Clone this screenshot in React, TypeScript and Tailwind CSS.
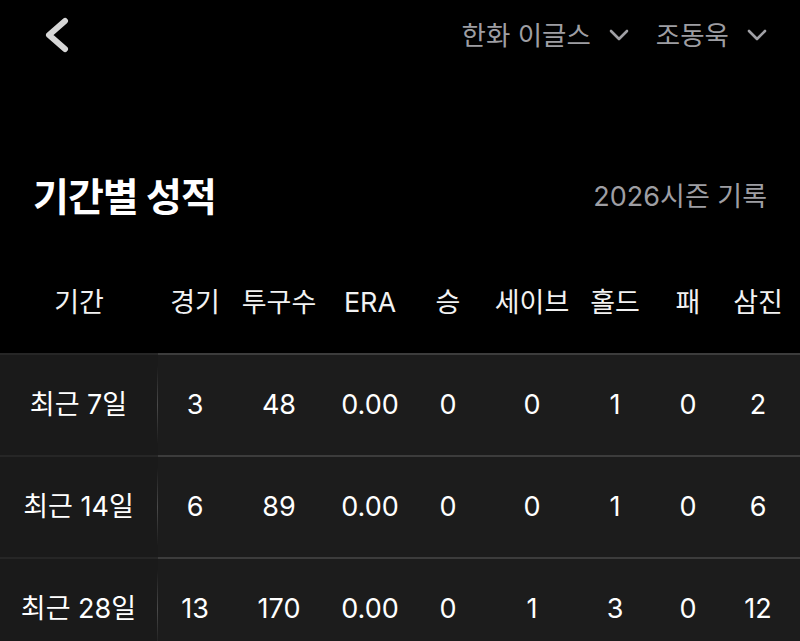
import React from 'react';

const font = { fontFamily: '"Inter", "Noto Sans CJK KR", sans-serif' };

const columns = ['경기', '투구수', 'ERA', '승', '세이브', '홀드', '패', '삼진'];

const rows = [
  { label: '최근 7일', values: ['3', '48', '0.00', '0', '0', '1', '0', '2'] },
  { label: '최근 14일', values: ['6', '89', '0.00', '0', '0', '1', '0', '6'] },
  { label: '최근 28일', values: ['13', '170', '0.00', '0', '1', '3', '0', '12'] },
];

const gridCols = 'grid grid-cols-[74px_94px_88px_68px_100px_66px_80px_60px]';

function Chevron() {
  return (
    <svg width="20" height="12" viewBox="0 0 20 12" fill="none">
      <path d="M2 2l8 8 8-8" stroke="#a0a0a5" strokeWidth="2.6" strokeLinecap="round" strokeLinejoin="round" />
    </svg>
  );
}

function Dropdown({ label }: { label: string }) {
  return (
    <button className="flex items-center gap-[18px] text-[26.5px] text-[#9e9ea3] leading-none">
      <span>{label}</span>
      <Chevron />
    </button>
  );
}

export default function App() {
  return (
    <div className="w-[800px] h-[641px] bg-black text-white overflow-hidden" style={font}>
      <header className="h-[70px] flex items-center justify-between pl-[44px] pr-[33px]">
        <button>
          <svg width="26" height="36" viewBox="0 0 26 36" fill="none">
            <path d="M21 4L5 18l16 14" stroke="#d6d6d6" strokeWidth="6" strokeLinecap="round" strokeLinejoin="round" />
          </svg>
        </button>
        <div className="flex items-center gap-[27px]">
          <Dropdown label="한화 이글스" />
          <Dropdown label="조동욱" />
        </div>
      </header>

      <div className="mt-[102px] h-[50px] flex items-center justify-between pl-[33px] pr-[33px]">
        <h1 className="text-[39px] font-bold tracking-tight">기간별 성적</h1>
        <span className="text-[27px] text-[#9e9ea3]">2026시즌 기록</span>
      </div>

      <div className="mt-[31px] h-[100px] flex items-center text-[27px] text-[#f2f2f2]">
        <div className="w-[158px] text-center">기간</div>
        <div className={gridCols}>
          {columns.map((c) => (
            <div key={c} className="text-center whitespace-nowrap">{c}</div>
          ))}
        </div>
      </div>

      <div className="flex flex-col">
        {rows.map((row) => (
          <div key={row.label} className="flex h-[102px] text-[27px] text-white">
            <div className="w-[158px] flex items-center bg-[#1a1a1a] border-t-2 border-[#262626]">
              <div className="flex-1 text-center whitespace-nowrap">{row.label}</div>
              <div className="w-px h-[78px] bg-gradient-to-b from-transparent via-[#4a4a4a] to-transparent" />
            </div>
            <div className={`${gridCols} flex-1 items-center bg-[#1c1c1c] border-t-2 border-[#3c3c3c]`}>
              {row.values.map((v, i) => (
                <div key={i} className="text-center">{v}</div>
              ))}
            </div>
          </div>
        ))}
      </div>
    </div>
  );
}
